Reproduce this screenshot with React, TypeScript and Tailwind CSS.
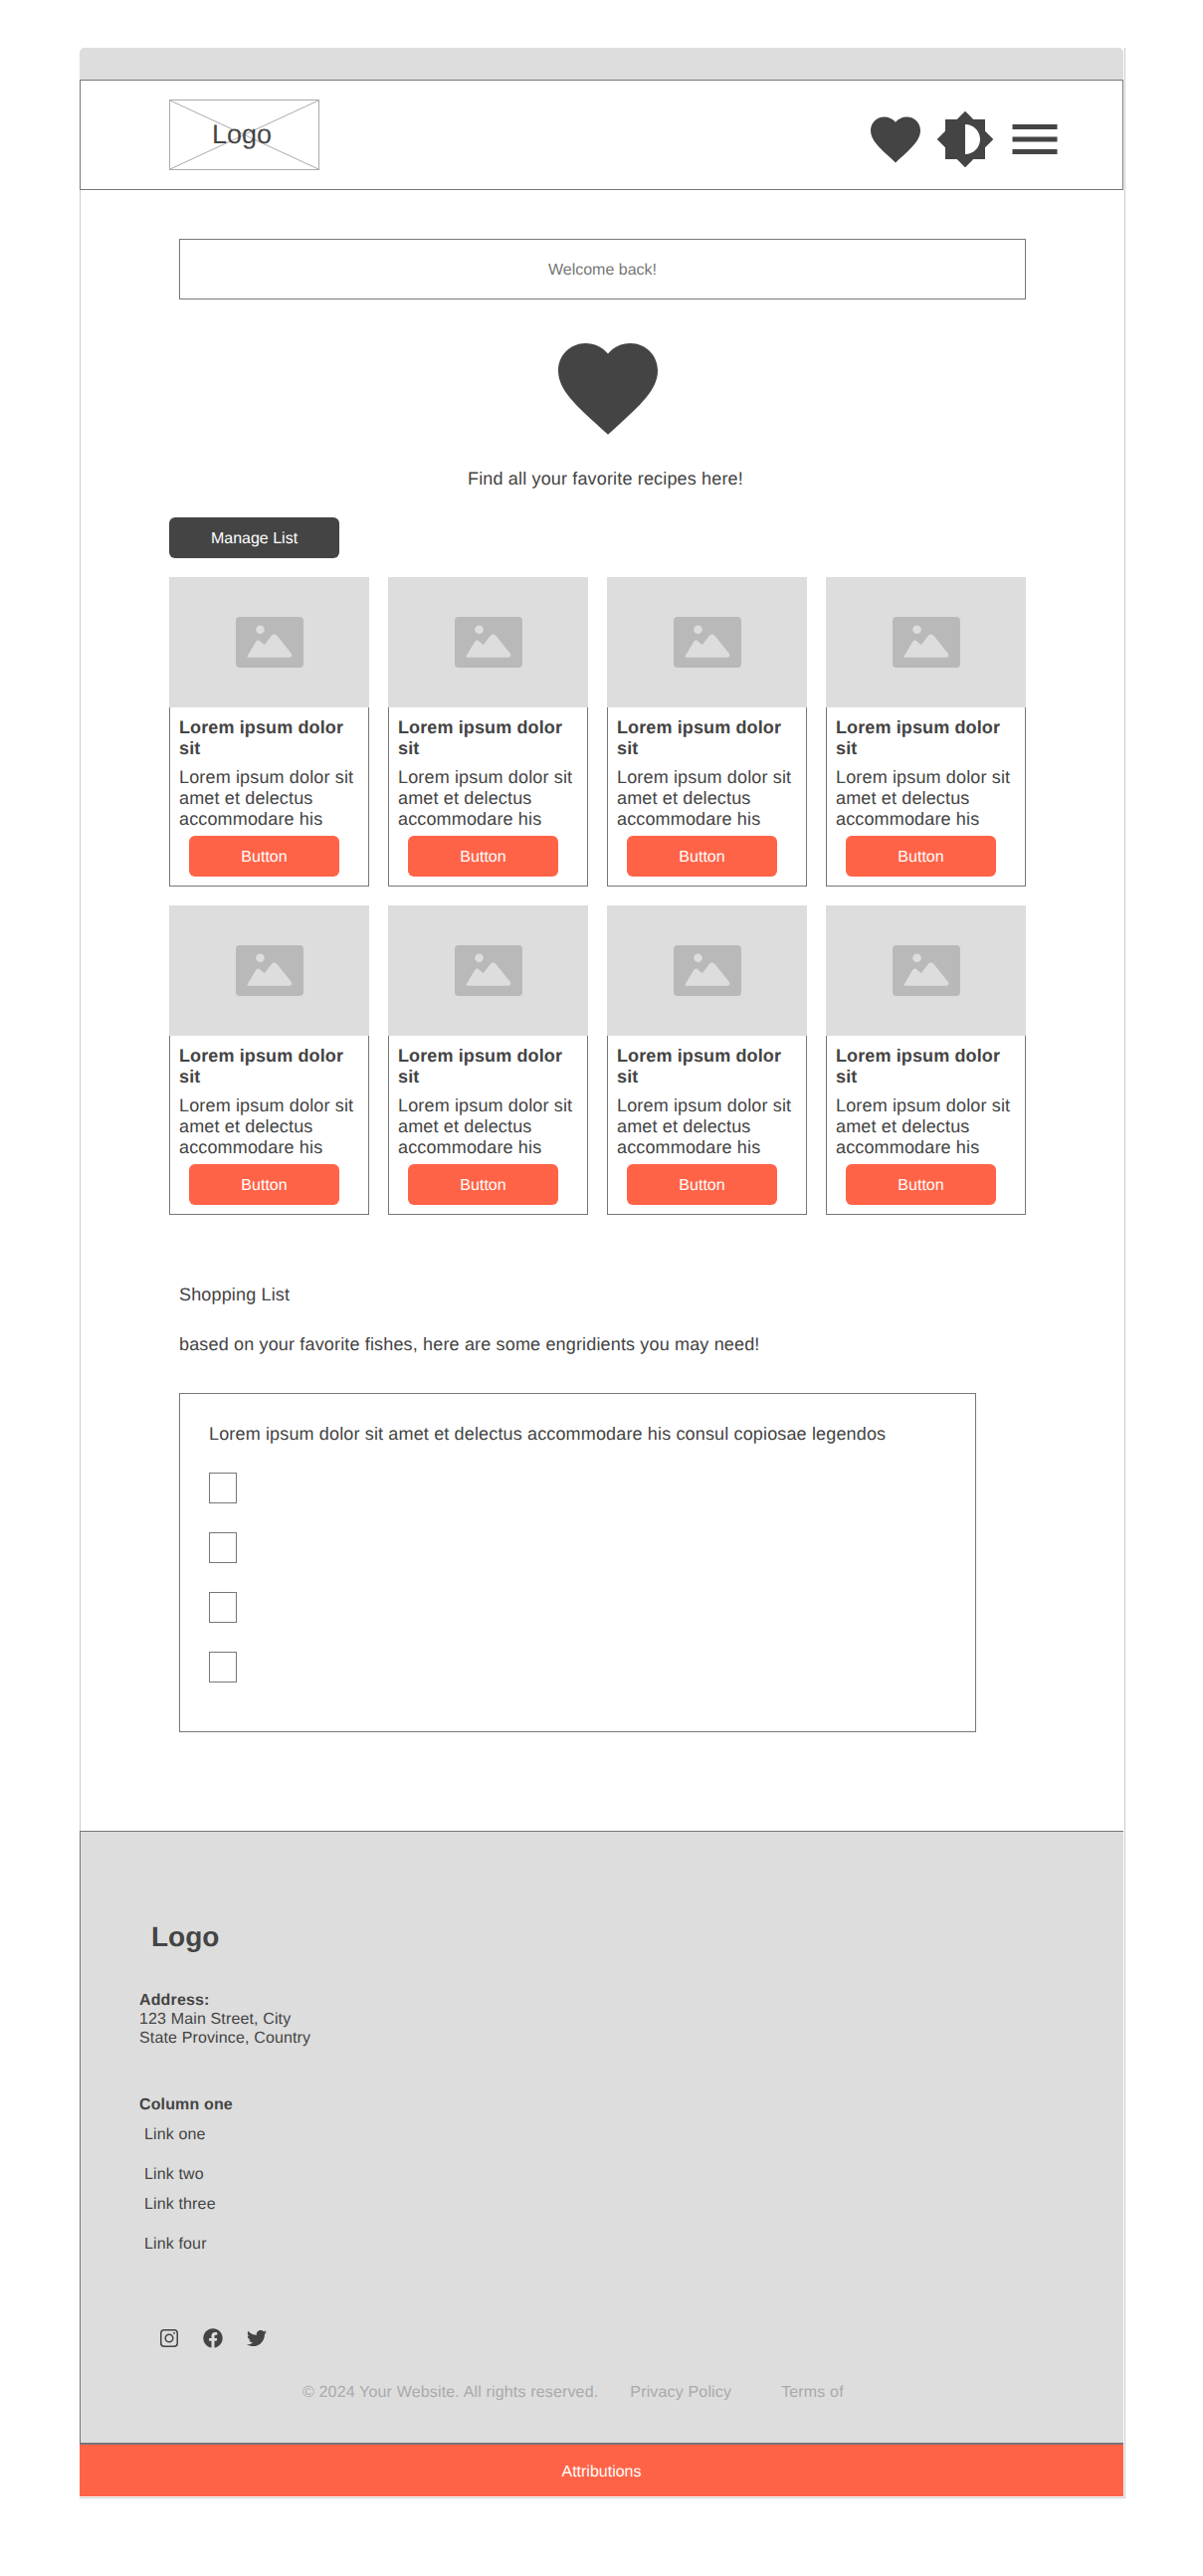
import React from "react";
import { FaFacebook, FaTwitter } from "react-icons/fa";

function Heart({ className }: { className: string }) {
  return (
    <svg viewBox="0 0 24 24" className={className} fill="#444444">
      <path d="M12 21.35l-1.45-1.32C5.4 15.36 2 12.28 2 8.5 2 5.42 4.42 3 7.5 3c1.74 0 3.41.81 4.5 2.09C13.09 3.81 14.76 3 16.5 3 19.58 3 22 5.42 22 8.5c0 3.78-3.4 6.86-8.55 11.54L12 21.35z" />
    </svg>
  );
}

function Picture() {
  return (
    <svg viewBox="0 0 68 51" className="w-[68px] h-[51px]">
      <rect x="0" y="0" width="68" height="51" rx="4" fill="#b9b9b9" />
      <circle cx="24.5" cy="12.7" r="4.3" fill="#dddddd" />
      <path
        d="M12.5 39.7 L21 25.5 Q22.5 23.5 24 25.5 L29 29.5 L36.5 19.5 Q38.5 17.5 40.5 19.5 L55 37.5 Q56 39.7 54 39.7 Z"
        fill="#dddddd"
        stroke="#dddddd"
        strokeWidth="2"
        strokeLinejoin="round"
      />
    </svg>
  );
}

function Card() {
  return (
    <div className="h-[311px] flex flex-col">
      <div className="h-[131px] bg-[#dddddd] flex items-center justify-center">
        <Picture />
      </div>
      <div className="h-[180px] border-x border-b border-[#777777] pl-[9px] pr-[5px]">
        <div className="mt-[10px] text-[18px] leading-[21px] font-bold tracking-[0.12px]">Lorem ipsum dolor sit</div>
        <div className="mt-[8px] text-[18px] leading-[21px] tracking-[0.15px]">Lorem ipsum dolor sit amet et delectus accommodare his</div>
        <div className="mt-[6px] ml-[10px] w-[151px] h-[41px] pt-[2px] rounded-[6px] bg-[#ff6347] text-white text-[16px] flex items-center justify-center">
          Button
        </div>
      </div>
    </div>
  );
}

export default function App() {
  return (
    <div className="min-h-[2589px] bg-white pt-[48px] pl-[80px] text-[#444444] [text-rendering:geometricPrecision] font-['Liberation_Sans',Arial,sans-serif]">
      <div className="w-[1051px] border-r border-b border-[#cccccc]">
        <div className="h-[32px] w-[1049px] bg-[#dddddd] rounded-t-[5px]" />
        <header className="h-[111px] w-[1049px] border border-[#777777] flex justify-between pl-[89px] pr-[58px]">
          <div className="relative mt-[19px] w-[151px] h-[71px] border border-[#aaaaaa] flex items-center justify-center pr-[5px]">
            <svg className="absolute inset-0 w-full h-full" preserveAspectRatio="none" viewBox="0 0 149 69">
              <path d="M0 0L149 69M149 0L0 69" stroke="#aaaaaa" strokeWidth="1" fill="none" />
            </svg>
            <span className="relative text-[27px] leading-[32px] -mt-[1px]">Logo</span>
          </div>
          <div className="mt-[29px] flex gap-[10px] h-[60px]">
            <Heart className="w-[60px] h-[60px]" />
            <svg viewBox="0 0 24 24" className="w-[60px] h-[60px]" fill="#444444">
              <path d="M20 15.31L23.31 12 20 8.69V4h-4.69L12 .69 8.69 4H4v4.69L.69 12 4 15.31V20h4.69L12 23.31 15.31 20H20v-4.69zM12 18V6c3.31 0 6 2.69 6 6s-2.69 6-6 6z" />
            </svg>
            <svg viewBox="0 0 24 24" className="w-[60px] h-[60px]" fill="#444444">
              <path d="M3 18h18v-2H3v2zm0-5h18v-2H3v2zm0-7v2h18V6H3z" />
            </svg>
          </div>
        </header>
        <main className="border-l border-[#cccccc] h-[1649px] flex flex-col items-start">
          <div className="mt-[49px] ml-[99px] w-[851px] h-[61px] pt-[2px] border border-[#777777] flex items-center justify-center text-[16px] text-[#777777]">
            Welcome back!
          </div>
          <Heart className="mt-[29px] ml-[470px] w-[120px] h-[120px]" />
          <p className="mt-[21px] ml-[389px] text-[18px] leading-[21px] tracking-[0.16px]">Find all your favorite recipes here!</p>
          <div className="mt-[28px] ml-[89px] w-[171px] h-[41px] pt-[2px] rounded-[6px] bg-[#444444] text-white text-[16px] flex items-center justify-center">
            Manage List
          </div>
          <div className="mt-[19px] ml-[89px] grid grid-cols-[repeat(4,201px)] gap-[19px]">
            {Array.from({ length: 8 }).map((_, i) => (
              <Card key={i} />
            ))}
          </div>
          <p className="mt-[70px] ml-[99px] text-[18px] leading-[21px] tracking-[0.16px]">Shopping List</p>
          <p className="mt-[29px] ml-[99px] text-[18px] leading-[21px] tracking-[0.16px]">
            based on your favorite fishes, here are some engridients you may need!
          </p>
          <div className="mt-[38px] ml-[99px] w-[801px] h-[341px] border border-[#777777] pl-[29px] pt-[30px]">
            <p className="text-[18px] leading-[21px] tracking-[0.15px]">
              Lorem ipsum dolor sit amet et delectus accommodare his consul copiosae legendos
            </p>
            <div className="mt-[28px] flex flex-col gap-[29px]">
              {[0, 1, 2, 3].map((i) => (
                <div key={i} className="w-[28px] h-[31px] border border-[#777777]" />
              ))}
            </div>
          </div>
        </main>
        <footer className="w-[1049px] h-[617px] bg-[#dddddd] border-l border-t border-b-2 border-[#777777] flex flex-col items-start">
          <div className="mt-[90px] ml-[71px] text-[28px] leading-[32px] font-bold">Logo</div>
          <div className="mt-[38px] ml-[59px] text-[16px] leading-[19px] tracking-[0.14px]">
            <div className="font-bold">Address:</div>
            <div>123 Main Street, City</div>
            <div>State Province, Country</div>
          </div>
          <div className="mt-[48px] ml-[59px] text-[16px] leading-[19px] font-bold tracking-[0.14px]">Column one</div>
          <div className="ml-[64px] text-[16px] leading-[19px] tracking-[0.14px]">
            <div className="mt-[11px]">Link one</div>
            <div className="mt-[21px]">Link two</div>
            <div className="mt-[11px]">Link three</div>
            <div className="mt-[21px]">Link four</div>
          </div>
          <div className="mt-[75px] ml-[80px] flex items-center h-[20px] text-[#444444]">
            <svg viewBox="0 0 18 18" className="w-[18px] h-[18px]" fill="none" stroke="#444444" strokeWidth="1.5">
              <rect x=".75" y=".75" width="16.5" height="16.5" rx="3.2" />
              <circle cx="9" cy="9" r="3.8" />
              <circle cx="14" cy="4" r=".9" fill="#444444" stroke="none" />
            </svg>
            <FaFacebook className="ml-[25px] w-[20px] h-[20px]" />
            <FaTwitter className="ml-[24px] w-[20px] h-[20px]" />
          </div>
          <div className="mt-[35px] ml-[223px] h-[17px] overflow-hidden flex text-[16px] leading-[19px] text-[#aaaaaa] tracking-[0.16px]">
            <span>© 2024 Your Website. All rights reserved.</span>
            <span className="ml-[32px]">Privacy Policy</span>
            <span className="ml-[50px]">Terms of</span>
          </div>
        </footer>
        <div className="w-[1049px] h-[52px] pt-[4px] bg-[#ff6347] mb-[1px] flex items-center justify-center text-white text-[16px]">
          Attributions
        </div>
      </div>
    </div>
  );
}
